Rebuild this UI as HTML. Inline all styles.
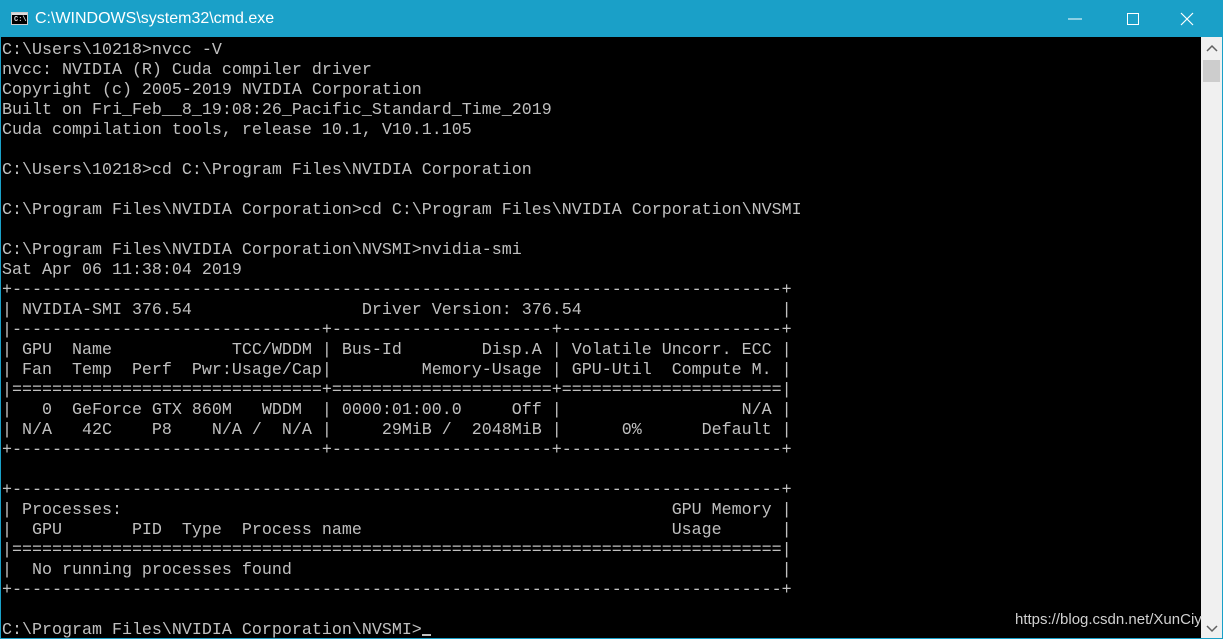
<!DOCTYPE html>
<html><head><meta charset="utf-8"><style>
html,body{margin:0;padding:0;background:#000;width:1223px;height:639px;overflow:hidden;position:relative}
.title{position:absolute;left:0;top:0;width:1223px;height:37px;background:#1aa0c8;}
.ttext{position:absolute;left:35px;top:10px;font:16px "Liberation Sans",sans-serif;color:#fff;}
.icon{position:absolute;left:11px;top:12px;width:17px;height:13px;background:#000;border:1px solid #ccc;box-sizing:border-box}
.icon:before{content:"";position:absolute;left:0;top:0;right:0;height:2px;background:#ddd}
.icon span{position:absolute;left:2px;top:3px;font:bold 7px "Liberation Mono",monospace;color:#ddd}
pre{position:absolute;left:2px;top:41px;margin:0;font:16.67px/20px "Liberation Mono",monospace;color:#c0c0c0;white-space:pre}
.sb{position:absolute;left:1201px;top:37px;width:21px;height:601px;background:#f0f0f0}
.thumb{position:absolute;left:1203px;top:60px;width:17px;height:22px;background:#cdcdcd}
.bl{position:absolute;left:0;top:37px;width:1px;height:602px;background:#1aa0c8}
.br{position:absolute;right:0;top:37px;width:1px;height:602px;background:#1aa0c8}
.bb{position:absolute;left:0;bottom:0;width:1223px;height:1px;background:#1aa0c8}
.wm{position:absolute;left:1015px;top:611px;font:15px "Liberation Sans",sans-serif;color:#d0d0d0}
.cur{position:absolute;left:422px;top:634px;width:9px;height:2px;background:#c0c0c0}
</style></head><body>
<div class="title"><div class="icon"><span>C:\</span></div><div class="ttext">C:\WINDOWS\system32\cmd.exe</div>
<svg style="position:absolute;left:1060px;top:10px" width="160" height="20">
<line x1="8" y1="9" x2="22" y2="9" stroke="#fff" stroke-width="1"/>
<rect x="67.5" y="3.5" width="11" height="11" fill="none" stroke="#fff"/>
<path d="M121 3 L133 15 M133 3 L121 15" stroke="#fff" stroke-width="1.2"/>
</svg></div>
<pre>C:\Users\10218>nvcc -V
nvcc: NVIDIA (R) Cuda compiler driver
Copyright (c) 2005-2019 NVIDIA Corporation
Built on Fri_Feb__8_19:08:26_Pacific_Standard_Time_2019
Cuda compilation tools, release 10.1, V10.1.105

C:\Users\10218>cd C:\Program Files\NVIDIA Corporation

C:\Program Files\NVIDIA Corporation>cd C:\Program Files\NVIDIA Corporation\NVSMI

C:\Program Files\NVIDIA Corporation\NVSMI>nvidia-smi
Sat Apr 06 11:38:04 2019
+-----------------------------------------------------------------------------+
| NVIDIA-SMI 376.54                 Driver Version: 376.54                    |
|-------------------------------+----------------------+----------------------+
| GPU  Name            TCC/WDDM | Bus-Id        Disp.A | Volatile Uncorr. ECC |
| Fan  Temp  Perf  Pwr:Usage/Cap|         Memory-Usage | GPU-Util  Compute M. |
|===============================+======================+======================|
|   0  GeForce GTX 860M   WDDM  | 0000:01:00.0     Off |                  N/A |
| N/A   42C    P8    N/A /  N/A |     29MiB /  2048MiB |      0%      Default |
+-------------------------------+----------------------+----------------------+

+-----------------------------------------------------------------------------+
| Processes:                                                       GPU Memory |
|  GPU       PID  Type  Process name                               Usage      |
|=============================================================================|
|  No running processes found                                                 |
+-----------------------------------------------------------------------------+

C:\Program Files\NVIDIA Corporation\NVSMI></pre>
<div class="cur"></div>
<div class="sb"></div><div class="thumb"></div>
<svg style="position:absolute;left:1204px;top:44px" width="16" height="10"><path d="M3 7 L8 2 L13 7" fill="none" stroke="#606060" stroke-width="1.5"/></svg>
<svg style="position:absolute;left:1204px;top:624px" width="16" height="10"><path d="M3 2 L8 7 L13 2" fill="none" stroke="#606060" stroke-width="1.5"/></svg>
<div class="wm">https://blog.csdn.net/XunCiy</div>
<div class="bl"></div><div class="br"></div><div class="bb"></div>
</body></html>
